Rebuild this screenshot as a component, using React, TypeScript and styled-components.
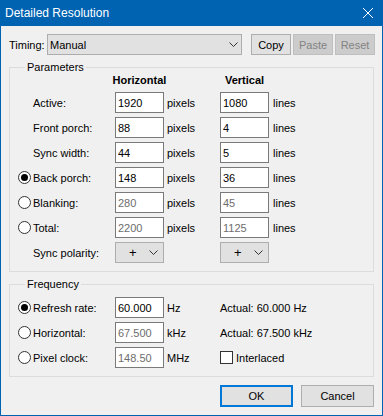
import styled, { createGlobalStyle } from "styled-components";

const GlobalStyle = createGlobalStyle`
  html, body {
    margin: 0;
    padding: 0;
    background: #f0f0f0;
  }
  body {
    font-family: "Liberation Sans", Arial, sans-serif;
    font-size: 11px;
    color: #000;
  }
`;

const Window = styled.div`
  width: 383px;
  height: 416px;
  box-sizing: border-box;
  border: 1px solid #0063b1;
  border-top: none;
  background: #f0f0f0;
  display: flex;
  flex-direction: column;
`;

const TitleBar = styled.div`
  height: 26px;
  margin: 0 -1px;
  padding: 0 10px 0 5px;
  background: #0063b1;
  color: #fff;
  font-size: 12px;
  display: flex;
  align-items: center;
  justify-content: space-between;
`;

const Title = styled.span`
  line-height: 16px;
`;

const Body = styled.div`
  padding: 8px 8px 0 8px;
  display: flex;
  flex-direction: column;
`;

const TimingRow = styled.div`
  display: flex;
  align-items: center;
  height: 21px;
`;

const TimingLabel = styled.span`
  width: 38px;
  flex-shrink: 0;
  white-space: nowrap;
`;

const Combo = styled.div<{ $width: number }>`
  width: ${(p) => p.$width}px;
  flex-shrink: 0;
  height: 21px;
  box-sizing: border-box;
  border: 1px solid #adadad;
  background: #e1e1e1;
  display: flex;
  align-items: center;
  justify-content: space-between;
  padding: 0 3px 0 2px;
`;

const ComboGap = styled.div`
  width: 9px;
  flex-shrink: 0;
`;

const ToolButtons = styled.div`
  display: flex;
  gap: 2px;
`;

const Button = styled.div<{ $disabled?: boolean; $default?: boolean; $width: number; $height: number }>`
  width: ${(p) => p.$width}px;
  height: ${(p) => p.$height}px;
  flex-shrink: 0;
  box-sizing: border-box;
  display: flex;
  align-items: center;
  justify-content: center;
  background: ${(p) => (p.$disabled ? "#cccccc" : "#e1e1e1")};
  border: ${(p) => (p.$default ? "2px solid #0078d7" : p.$disabled ? "1px solid #bfbfbf" : "1px solid #adadad")};
  color: ${(p) => (p.$disabled ? "#838383" : "#000")};
`;

const GroupBox = styled.fieldset<{ $top: number; $bottom: number }>`
  margin: 6px 0 0 0;
  padding: ${(p) => p.$top}px 0 ${(p) => p.$bottom}px 8px;
  border: 1px solid #dcdcdc;
  min-width: 0;
`;

const Legend = styled.legend`
  margin-left: 7px;
  padding: 0 2px;
  line-height: 12px;
`;

const Grid = styled.div<{ $rows: string }>`
  display: grid;
  grid-template-columns: 15px 82px 49px 56px 49px auto;
  grid-template-rows: ${(p) => p.$rows};
  row-gap: 4px;
  align-items: center;
`;

const HeaderCell = styled.div<{ $col: number }>`
  grid-column: ${(p) => p.$col};
  justify-self: center;
  font-weight: bold;
  white-space: nowrap;
  line-height: 15px;
`;

const RowLabel = styled.span`
  grid-column: 2;
  white-space: nowrap;
`;

const Radio = styled.span<{ $checked?: boolean }>`
  grid-column: 1;
  width: 13px;
  height: 13px;
  box-sizing: border-box;
  border: 1px solid #333;
  border-radius: 50%;
  background: #fff;
  display: flex;
  align-items: center;
  justify-content: center;
  &::after {
    content: "";
    display: ${(p) => (p.$checked ? "block" : "none")};
    width: 7px;
    height: 7px;
    border-radius: 50%;
    background: #000;
  }
`;

const TextBox = styled.input<{ $disabled?: boolean }>`
  width: 49px;
  height: 21px;
  box-sizing: border-box;
  margin: 0;
  padding: 0 2px;
  border: 1px solid #7a7a7a;
  border-radius: 0;
  background: #fff;
  font: inherit;
  color: ${(p) => (p.$disabled ? "#6d6d6d" : "#000")};
  outline: none;
`;

const Unit = styled.span<{ $pad: number }>`
  padding-left: ${(p) => p.$pad}px;
  white-space: nowrap;
`;

const PolarityCombo = styled.div`
  width: 49px;
  height: 21px;
  box-sizing: border-box;
  border: 1px solid #adadad;
  background: #e1e1e1;
  display: flex;
  align-items: center;
  padding: 0 5px 0 13px;
  justify-content: space-between;
  font-size: 13px;
`;

const Actual = styled.div`
  grid-column: 5 / span 2;
  display: flex;
  align-items: center;
  white-space: nowrap;
`;

const CheckBox = styled.span`
  width: 13px;
  height: 13px;
  box-sizing: border-box;
  border: 1px solid #333;
  background: #fff;
  margin-right: 3px;
`;

const ButtonRow = styled.div`
  margin-top: 8px;
  display: flex;
  justify-content: flex-end;
  gap: 8px;
`;

function Chevron() {
  return (
    <svg width="9" height="5" viewBox="0 0 9 5">
      <path d="M0.5 0.5 L4.5 4.5 L8.5 0.5" fill="none" stroke="#333" strokeWidth="1" />
    </svg>
  );
}

function CloseIcon() {
  return (
    <svg width="10" height="10" viewBox="0 0 10 10">
      <path d="M0 0 L10 10 M10 0 L0 10" stroke="#fff" strokeWidth="1" />
    </svg>
  );
}

type ParamRow = {
  label: string;
  radio?: boolean;
  checked?: boolean;
  h: string;
  v: string;
  disabled?: boolean;
};

const paramRows: ParamRow[] = [
  { label: "Active:", h: "1920", v: "1080" },
  { label: "Front porch:", h: "88", v: "4" },
  { label: "Sync width:", h: "44", v: "5" },
  { label: "Back porch:", radio: true, checked: true, h: "148", v: "36" },
  { label: "Blanking:", radio: true, h: "280", v: "45", disabled: true },
  { label: "Total:", radio: true, h: "2200", v: "1125", disabled: true },
];

const freqRows = [
  { label: "Refresh rate:", value: "60.000", unit: "Hz", checked: true, extra: "Actual: 60.000 Hz" },
  { label: "Horizontal:", value: "67.500", unit: "kHz", extra: "Actual: 67.500 kHz" },
  { label: "Pixel clock:", value: "148.50", unit: "MHz", extra: "" },
];

export default function App() {
  return (
    <>
      <GlobalStyle />
      <Window>
        <TitleBar>
          <Title>Detailed Resolution</Title>
          <CloseIcon />
        </TitleBar>
        <Body>
          <TimingRow>
            <TimingLabel>Timing:</TimingLabel>
            <Combo $width={195}>
              <span>Manual</span>
              <Chevron />
            </Combo>
            <ComboGap />
            <ToolButtons>
              <Button $width={40} $height={21}>Copy</Button>
              <Button $width={40} $height={21} $disabled>Paste</Button>
              <Button $width={40} $height={21} $disabled>Reset</Button>
            </ToolButtons>
          </TimingRow>

          <GroupBox $top={0} $bottom={8}>
            <Legend>Parameters</Legend>
            <Grid $rows="15px repeat(7, 21px)">
              <HeaderCell $col={3}>Horizontal</HeaderCell>
              <HeaderCell $col={5}>Vertical</HeaderCell>
              {paramRows.map((r) => (
                <>
                  {r.radio ? <Radio $checked={r.checked} /> : <span />}
                  <RowLabel>{r.label}</RowLabel>
                  <TextBox readOnly value={r.h} $disabled={r.disabled} />
                  <Unit $pad={3}>pixels</Unit>
                  <TextBox readOnly value={r.v} $disabled={r.disabled} />
                  <Unit $pad={4}>lines</Unit>
                </>
              ))}
              <span />
              <RowLabel>Sync polarity:</RowLabel>
              <PolarityCombo>
                <span>+</span>
                <Chevron />
              </PolarityCombo>
              <span />
              <PolarityCombo>
                <span>+</span>
                <Chevron />
              </PolarityCombo>
              <span />
            </Grid>
          </GroupBox>

          <GroupBox $top={7} $bottom={8}>
            <Legend>Frequency</Legend>
            <Grid $rows="repeat(3, 21px)">
              {freqRows.map((r, i) => (
                <>
                  <Radio $checked={r.checked} />
                  <RowLabel>{r.label}</RowLabel>
                  <TextBox readOnly value={r.value} $disabled={!r.checked} />
                  <Unit $pad={3}>{r.unit}</Unit>
                  {i < 2 ? (
                    <Actual>{r.extra}</Actual>
                  ) : (
                    <Actual>
                      <CheckBox />
                      Interlaced
                    </Actual>
                  )}
                </>
              ))}
            </Grid>
          </GroupBox>

          <ButtonRow>
            <Button $width={73} $height={22} $default>OK</Button>
            <Button $width={73} $height={22}>Cancel</Button>
          </ButtonRow>
        </Body>
      </Window>
    </>
  );
}
